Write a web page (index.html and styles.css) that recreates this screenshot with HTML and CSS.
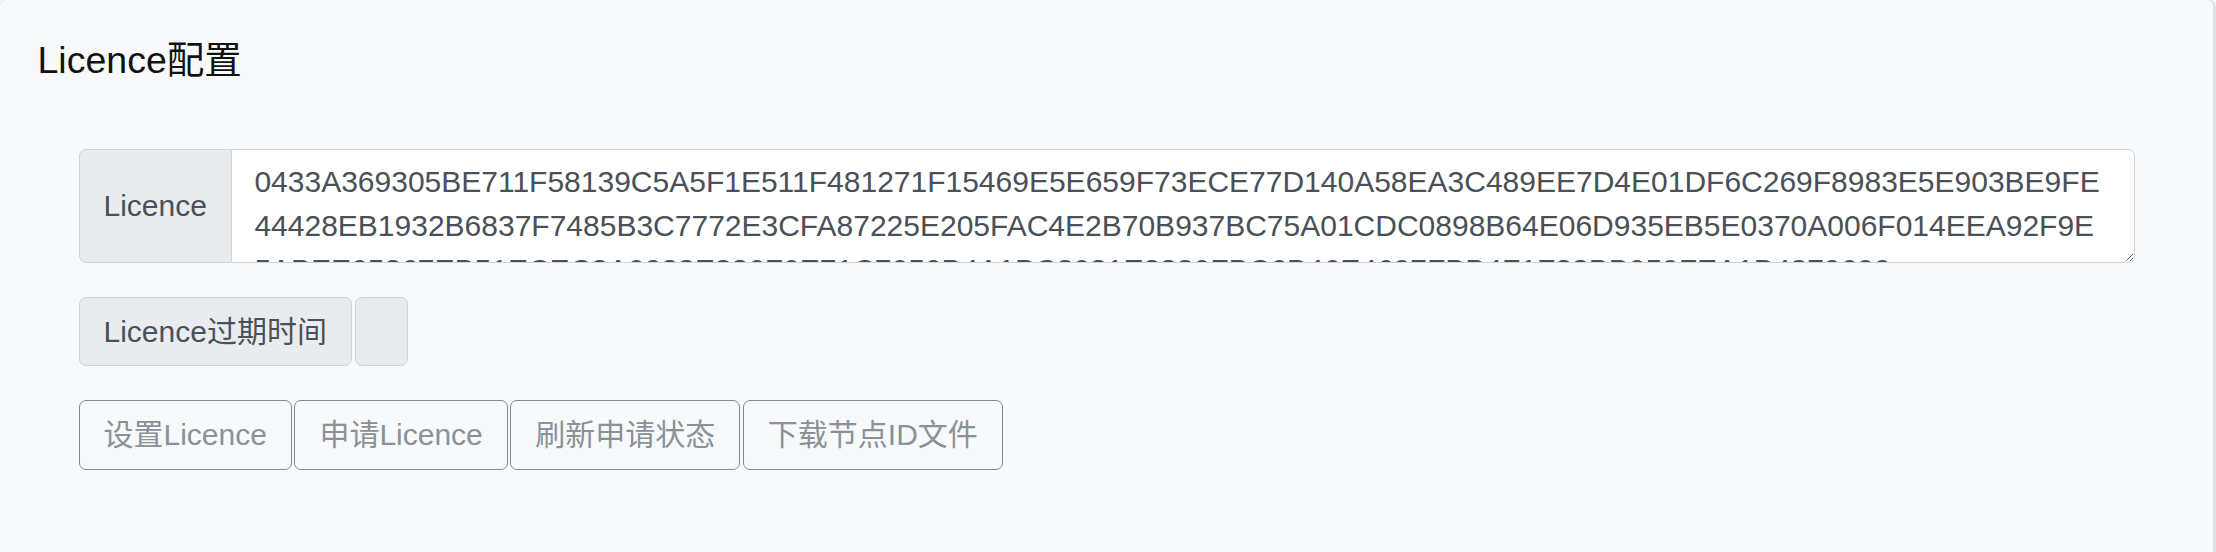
FILE: index.html
```html
<!DOCTYPE html>
<html lang="zh-CN">
<head>
    <meta charset="UTF-8">
    <meta name="viewport" content="width=device-width, initial-scale=1.0">
    <link rel="stylesheet" href="styles.css">
    <title>Licence配置</title>
</head>
<body>
    <div class="card">
        <div class="card-body">
            <h5 class="card-title">Licence配置</h5>
            <div class="licence-form">
                <div class="input-group">
                    <span class="input-group-text">Licence</span>
                    <textarea class="form-control" rows="2" id="licence">0433A369305BE711F58139C5A5F1E511F481271F15469E5E659F73ECE77D140A58EA3C489EE7D4E01DF6C269F8983E5E903BE9FE44428EB1932B6837F7485B3C7772E3CFA87225E205FAC4E2B70B937BC75A01CDC0898B64E06D935EB5E0370A006F014EEA92F9E5ABEE05367EB51ECEC8A0923E836F0E71C7050B4A1BC8081E3330FBC6B46E4697FBB4F1F38BB059FEA1B4379699</textarea>
                </div>
                <div class="expire-row">
                    <span class="input-group-text single">Licence过期时间</span>
                    <span class="input-group-text single empty" id="expire"></span>
                </div>
                <div class="actions">
                    <button class="btn" id="set">设置Licence</button>
                    <button class="btn" id="apply">申请Licence</button>
                    <button class="btn" id="refresh">刷新申请状态</button>
                    <button class="btn" id="download">下载节点ID文件</button>
                </div>
            </div>
        </div>
    </div>
</body>
</html>
```

FILE: styles.css
```css
/* Licence settings panel */
body {
    margin: 0;
    background-color: #f8f9fa;
    font-family: "Liberation Sans", Arial, "Noto Sans CJK SC", sans-serif;
    font-size: 30px;
    line-height: 1.5;
    color: #495057;
}

.card {
    margin: -1px 2px 0 -1px;
    min-height: 600px;
    background-color: #f8f9fa;
    border: 1px solid #dfe2e5;
    border-radius: 7px;
    box-shadow: 2px 1px 2px rgba(0, 0, 0, 0.12);
}

.card-body {
    padding: 37.5px;
}

.card-title {
    margin: 0;
    font-size: 37.5px;
    font-weight: 400;
    line-height: 1.2;
    color: #111;
}

.licence-form {
    padding: 66px 41px 0;
    display: flex;
    flex-direction: column;
    gap: 34px;
}

.input-group {
    display: flex;
    align-items: stretch;
}

.input-group-text {
    display: flex;
    align-items: center;
    padding: 11.25px 24px;
    background-color: #e9ecef;
    border: 1px solid #ced4da;
    border-radius: 7px 0 0 7px;
    color: #495057;
    white-space: nowrap;
}

.input-group-text.single {
    border-radius: 7px;
}

.input-group-text.empty {
    width: 3px;
}

.form-control {
    flex: 1;
    box-sizing: border-box;
    height: 114px;
    margin: 0;
    padding: 10px 28.5px 10px 22.5px;
    font: inherit;
    line-height: 44px;
    color: #495057;
    background-color: #fff;
    border: 1px solid #ced4da;
    border-left: none;
    border-radius: 0 7px 7px 0;
    overflow: hidden;
    resize: vertical;
    word-break: break-all;
}

.expire-row {
    display: flex;
    gap: 3px;
}

.actions {
    display: flex;
    gap: 2.5px;
}

.btn {
    padding: 11.25px 24px;
    font: inherit;
    line-height: 1.5;
    color: #8a9198;
    background-color: transparent;
    border: 1px solid #81888f;
    border-radius: 7px;
    cursor: pointer;
}
```
